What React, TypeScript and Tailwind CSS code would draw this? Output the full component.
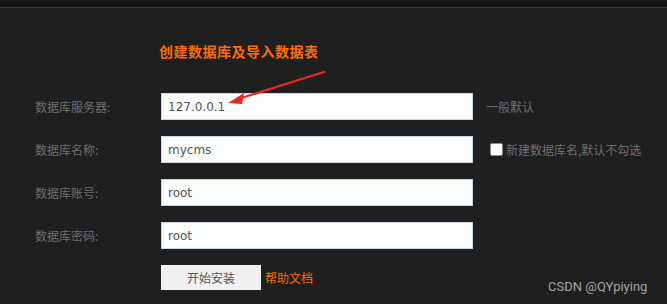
import React from "react";

const rows = [
  { label: "数据库服务器:", value: "127.0.0.1", note: "一般默认", check: false },
  { label: "数据库名称:", value: "mycms", note: "新建数据库名,默认不勾选", check: true },
  { label: "数据库账号:", value: "root", note: "", check: false },
  { label: "数据库密码:", value: "root", note: "", check: false },
];

export default function App() {
  return (
    <div
      className="relative w-[667px] h-[304px] overflow-hidden bg-[#1f1f1f]"
      style={{ fontFamily: '"Noto Sans CJK SC", "DejaVu Sans", sans-serif' }}
    >
      <div className="h-[7px] bg-[#151515]" />
      <div className="h-px bg-[#3a3a3a]" />
      <div className="pt-[33px]">
        <div className="pl-[159px] h-[20px] flex items-center text-[14px] font-bold tracking-[0.5px] text-[#ff6a00] leading-none">
          创建数据库及导入数据表
        </div>
        <div className="mt-[32px] flex flex-col gap-4">
          {rows.map((r) => (
            <div key={r.label} className="flex items-center h-[27px]">
              <div className="w-[161px] pl-[35px] text-[12px] text-[#6e6e6e] leading-none">{r.label}</div>
              <div
                className="w-[312px] h-[27px] bg-[#fbfefc] border border-[#c3d6ea] flex items-center pl-[6px] text-[12px] text-[#555]"
                style={{ fontFamily: '"DejaVu Sans", sans-serif' }}
              >
                {r.value}
              </div>
              {r.note && !r.check && (
                <div className="ml-[13px] text-[12px] text-[#6e6e6e] leading-none">{r.note}</div>
              )}
              {r.check && (
                <div className="ml-[17px] flex items-center">
                  <div className="w-[13px] h-[13px] bg-white border border-[#888] rounded-[2px]" />
                  <span className="ml-[3px] text-[12px] text-[#6e6e6e] leading-none">{r.note}</span>
                </div>
              )}
            </div>
          ))}
          <div className="flex items-center h-[25px]">
            <div className="w-[161px]" />
            <div className="w-[100px] h-[25px] bg-[#f0f0f0] flex items-center justify-center text-[12px] text-[#555]">
              开始安装
            </div>
            <div className="ml-[4px] text-[12px] text-[#ff6a00]">帮助文档</div>
          </div>
        </div>
      </div>
      <div
        className="absolute left-[548px] top-[280px] text-[13px] text-[#a5a5a5] leading-none"
        style={{ fontFamily: 'Roboto, "Liberation Sans", sans-serif' }}
      >
        CSDN @QYpiying
      </div>
      <svg className="absolute left-0 top-0" width="667" height="304" viewBox="0 0 667 304">
        <line x1="324" y1="72" x2="238" y2="99" stroke="#e8281d" strokeWidth="2.2" strokeLinecap="round" />
        <polygon points="228,103 244,93 242,104" fill="#e8281d" />
      </svg>
    </div>
  );
}
